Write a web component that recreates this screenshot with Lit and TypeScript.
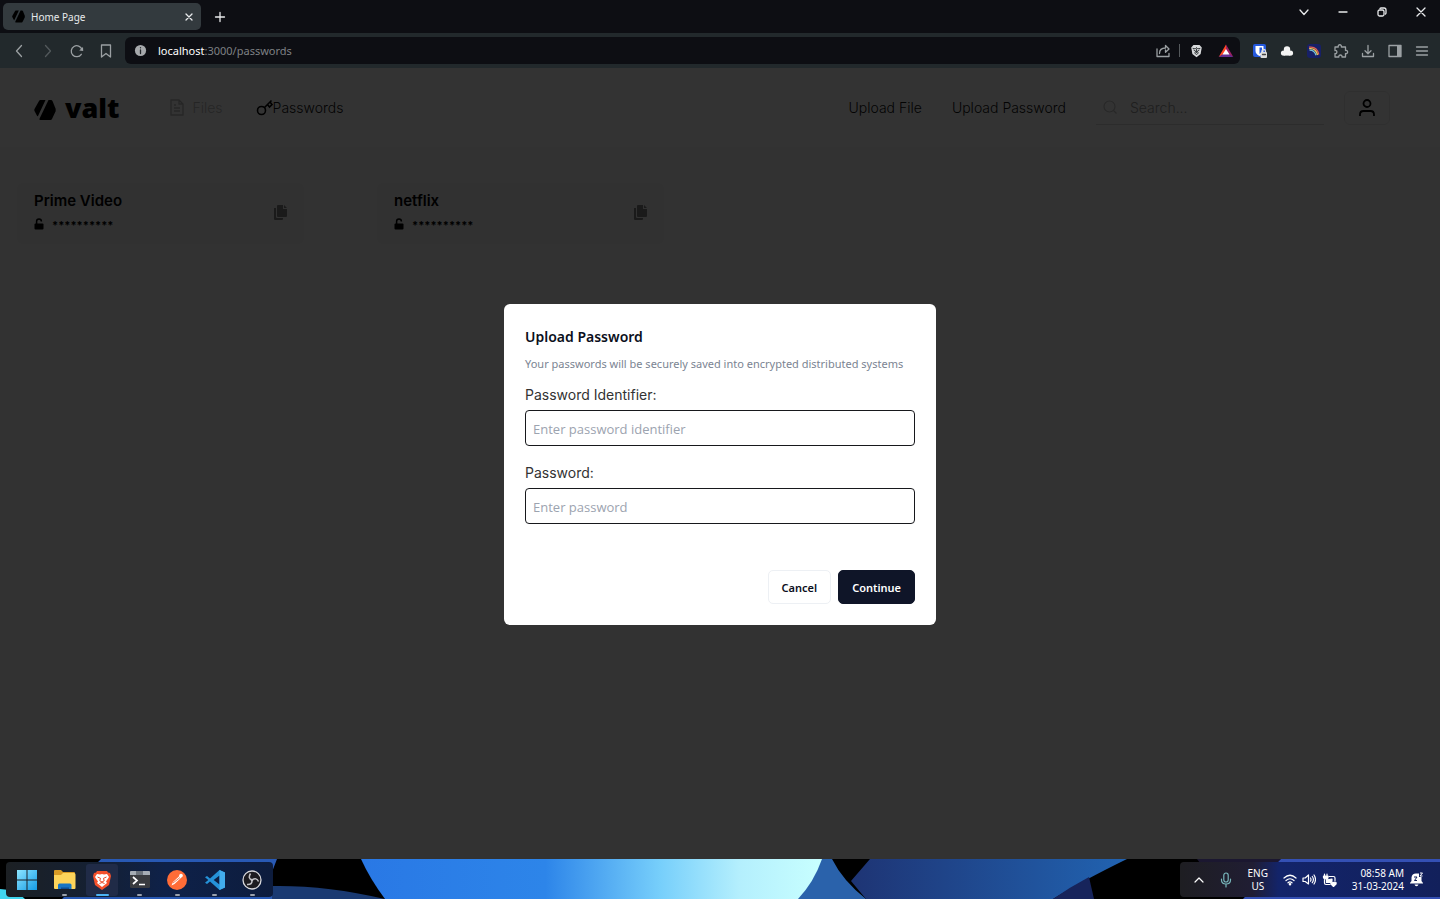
import { LitElement, html, css, svg } from "lit";
import { customElement, property } from "lit/decorators.js";

const logoMark = svg`
  <path d="M6.500 1H11.500L4 17Q3.300 17.500 3 16.700L.5 12Q0 11 .5 10L5 2Q5.500 1 6.500 1Z" />
  <path d="M14.500 1H17Q18 1 18.500 2L21.500 9.500Q22 11 21.500 12.500L18 20Q17.500 21 16.500 21H6.500Q5 21 5.500 19.800Z" />
`;

@customElement("browser-chrome")
export class BrowserChrome extends LitElement {
  static styles = css`
    :host {
      display: block;
      font-family: "Noto Sans", "Open Sans", sans-serif;
      color: #e8eaec;
    }
    button {
      border: 0;
      padding: 0;
      background: none;
      color: inherit;
      display: grid;
      place-items: center;
    }
    svg {
      display: block;
      fill: none;
      stroke: currentColor;
      stroke-width: 1.3;
      stroke-linecap: round;
      stroke-linejoin: round;
    }
    .tabs {
      height: 33px;
      background: #0d0e13;
      display: flex;
      align-items: flex-start;
      padding: 0 0 0 3px;
      box-sizing: border-box;
    }
    .tab {
      margin-top: 3px;
      width: 198px;
      height: 27px;
      box-sizing: border-box;
      border-radius: 5px;
      background: #333a3e;
      display: flex;
      align-items: center;
      gap: 6px;
      padding: 0 6px 0 9px;
      font-size: 10px;
    }
    .tab .name {
      flex: 1;
    }
    .tab .fav {
      fill: #000;
      stroke: none;
    }
    .new {
      width: 38px;
      height: 33px;
    }
    .controls {
      margin-left: auto;
      display: flex;
    }
    .controls button {
      width: 39px;
      height: 24px;
    }
    .bar {
      height: 35px;
      box-sizing: border-box;
      background: #22292c;
      display: flex;
      align-items: center;
      padding: 0 5px;
      color: #9ba0a3;
    }
    .bar button {
      width: 27px;
      height: 27px;
    }
    .nav {
      display: flex;
      gap: 2px;
      width: 120px;
    }
    .nav .off {
      color: #53595c;
    }
    .address {
      flex: 1;
      height: 27px;
      border-radius: 6px;
      background: #0d0e13;
      display: flex;
      align-items: center;
      gap: 2px;
      padding: 0 1px 0 9px;
    }
    .address input {
      position: absolute;
      opacity: 0;
      inset: 0;
    }
    .url {
      flex: 1;
      position: relative;
      margin-left: 9px;
      font-size: 11px;
      color: #7e8184;
    }
    .url b {
      font-weight: 400;
      color: #fff;
    }
    .sep {
      width: 1px;
      height: 13px;
      background: #55595c;
      margin: 0 1px;
    }
    .ext {
      display: flex;
      margin-left: 6px;
    }
    .face {
      stroke: #25292c;
      stroke-width: 1;
    }
  `;

  render() {
    return html`
      <div class="tabs">
        <div class="tab">
          <svg class="fav" width="13" height="13" viewBox="0 0 22 22">${logoMark}</svg>
          <span class="name">Home Page</span>
          <button aria-label="Close tab">
            <svg width="12" height="12" viewBox="0 0 12 12"><path d="M3 3l6 6M9 3l-6 6" /></svg>
          </button>
        </div>
        <button class="new" aria-label="New tab">
          <svg width="14" height="14" viewBox="0 0 14 14"><path d="M7 2.500v9M2.500 7h9" /></svg>
        </button>
        <div class="controls">
          <button aria-label="Search tabs"><svg width="12" height="12" viewBox="0 0 12 12"><path d="M2 4l4 4.500L10 4" /></svg></button>
          <button aria-label="Minimize"><svg width="12" height="12" viewBox="0 0 12 12"><path d="M2 6h8" /></svg></button>
          <button aria-label="Restore"><svg width="12" height="12" viewBox="0 0 12 12"><rect x="2" y="4" width="6" height="6" rx="1.500" /><path d="M4 2.500q.5-.5 1-.5h3q2 0 2 2v3q0 .5-.5 1" /></svg></button>
          <button aria-label="Close"><svg width="12" height="12" viewBox="0 0 12 12"><path d="M2 2l8 8M10 2l-8 8" /></svg></button>
        </div>
      </div>
      <div class="bar">
        <div class="nav">
          <button aria-label="Back"><svg width="16" height="16" viewBox="0 0 16 16"><path d="M10.500 2.500L5.500 8l5 5.500" /></svg></button>
          <button class="off" aria-label="Forward"><svg width="16" height="16" viewBox="0 0 16 16"><path d="M5.500 2.500l5 5.500-5 5.500" /></svg></button>
          <button aria-label="Reload"><svg width="16" height="16" viewBox="0 0 16 16"><path d="M12.300 11.300A5.500 5.500 0 1 1 13 6.500" /><path d="M14 4l.2 4-4-.5z" fill="currentColor" stroke="none" /></svg></button>
          <button aria-label="Bookmark"><svg width="16" height="16" viewBox="0 0 16 16"><path d="M3.500 2h9v12L8 10.500 3.500 14z" /></svg></button>
        </div>
        <div class="address">
          <svg width="13" height="13" viewBox="0 0 13 13"><circle cx="6.500" cy="6.500" r="5.600" fill="#a6a9ac" stroke="none" /><path d="M6.500 6v3.500M6.500 3.600v.2" stroke="#22262a" /></svg>
          <label class="url"><b>localhost</b>:3000/passwords<input aria-label="Address" value="localhost:3000/passwords" /></label>
          <button aria-label="Share"><svg width="16" height="16" viewBox="0 0 16 16"><path d="M2 6v7.500h12V10.500M4.500 10.500c0-3.500 2-5.500 6-5.500V2.500L14 6l-3.500 3.300V7" /></svg></button>
          <span class="sep"></span>
          <button aria-label="Brave Shields">
            <svg width="13" height="14" viewBox="0 0 14 16"><g stroke="none"><path d="M3.500 1h7l2.500 3-1.300 7.500L7 15 2.300 11.500 1 4z" fill="#d9dbdd" /></g><path class="face" d="M3 5l2.500.5L7 4l1.500 1.500L11 5M4 7l2 1-1 2.500 2 1.500 2-1.500L8 8l2-1M7 5.500V10" /></svg>
          </button>
          <button aria-label="Brave Rewards">
            <svg width="16" height="14" viewBox="0 0 16 14"><g stroke="none"><path d="M8 .5L.7 13 8 9z" fill="#ff4724" /><path d="M8 .5L15.300 13 8 9z" fill="#9e1f63" /><path d="M.7 13h14.600L8 8z" fill="#662d91" /><path d="M8 5l-3.500 5.500h7z" fill="#fff" /></g></svg>
          </button>
        </div>
        <div class="ext">
          <button aria-label="Password manager">
            <svg width="16" height="16" viewBox="0 0 16 16"><g stroke="none"><rect x="1" y="1" width="13" height="13" rx="2" fill="#2458dd" /><path d="M3.500 3h8v5q0 3-4 5-4-2-4-5z" fill="#fff" /><path d="M7.500 4.500h2.500V8q0 1.500-2.500 3z" fill="#2458dd" /><rect x="8.500" y="9" width="6.500" height="6" rx="1" fill="#ddd" /></g><path d="M10 9V8q0-1.500 1.700-1.500T13.500 8v1" stroke="#ddd" /><path d="M10.500 11.500h3" stroke="#444" /></svg>
          </button>
          <button aria-label="Cloud extension">
            <svg width="16" height="16" viewBox="0 0 16 16"><g fill="#f4f4f4" stroke="none"><circle cx="8" cy="6.500" r="3.200" /><circle cx="4.500" cy="10" r="2.600" /><circle cx="11.500" cy="10" r="2.600" /><rect x="4.500" y="8" width="7" height="4.600" /></g></svg>
          </button>
          <button aria-label="Rainbow extension">
            <svg width="16" height="16" viewBox="0 0 16 16"><rect x="1" y="1" width="14" height="14" rx="3" fill="#172067" stroke="none" /><g stroke-linecap="butt"><path d="M3 4.200Q11 3 12.800 11.500" stroke="#e56151" /><path d="M3.200 5.700Q10 5 11.500 12" stroke="#f2d15b" /><path d="M3.500 7.200Q8.500 7 10 12.300" stroke="#76c5d8" /></g></svg>
          </button>
          <button aria-label="Extensions"><svg width="16" height="16" viewBox="0 0 16 16"><path d="M2 4h3.300c-1-3 4-3 3 0h4.200v3.500c2.800-1 2.800 3.800 0 3V14H9c.5-2.700-3.700-2.700-3.200 0H2v-3.500c2.500.5 2.500-3.500 0-3z" /></svg></button>
          <button aria-label="Downloads"><svg width="16" height="16" viewBox="0 0 16 16"><path d="M8 2.500v8M5 7.800l3 3 3-3M2.500 10.500v3h11v-3" /></svg></button>
          <button aria-label="Sidebar"><svg width="16" height="16" viewBox="0 0 16 16"><rect x="2" y="2.500" width="12" height="11" /><path d="M10 3h4v10.500h-4z" fill="currentColor" stroke="none" /></svg></button>
          <button aria-label="Menu"><svg width="16" height="16" viewBox="0 0 16 16"><path d="M2.500 4h11M2.500 8h11M2.500 12h11" /></svg></button>
        </div>
      </div>
    `;
  }
}

@customElement("password-card")
export class PasswordCard extends LitElement {
  @property() name = "";

  static styles = css`
    :host {
      display: block;
      padding: 0 17px;
    }
    .card {
      max-width: 287px;
      height: 61px;
      box-sizing: border-box;
      padding: 0 16px 2px 17px;
      background: #f2f2f2;
      border-radius: 6px;
      display: flex;
      align-items: center;
      justify-content: space-between;
      color: #000;
    }
    h3 {
      margin: 0;
      font-size: 15px;
      line-height: 20px;
      font-weight: 600;
    }
    .secret {
      display: flex;
      align-items: center;
      gap: 8px;
      margin-top: 2px;
      height: 22px;
      font-size: 11px;
      font-weight: 700;
    }
    .secret span {
      padding-top: 2px;
    }
    button {
      border: 0;
      background: none;
      padding: 0;
      color: #828282;
    }
    svg {
      display: block;
    }
  `;

  render() {
    return html`
      <article class="card">
        <div>
          <h3>${this.name}</h3>
          <div class="secret">
            <svg width="10" height="12" viewBox="0 0 10 12"><rect x=".5" y="5.500" width="9" height="6" rx="1" fill="currentColor" /><path d="M2.600 6V3.500Q2.600 1 5 1t2.400 2.500" fill="none" stroke="currentColor" stroke-width="1.500" /></svg>
            <span>**********</span>
          </div>
        </div>
        <button aria-label="Copy password">
          <svg width="15" height="16" viewBox="0 0 15 16" fill="currentColor"><path d="M5 0h5v4h4v7q0 1-1 1H5q-1 0-1-1V1q0-1 1-1zM11 0l3 3h-3zM1 3h2v9q0 1 1 1h6v1q0 1-1 1H2q-1 0-1-1z" /></svg>
        </button>
      </article>
    `;
  }
}

@customElement("task-bar")
export class TaskBar extends LitElement {
  static styles = css`
    :host {
      display: flex;
      justify-content: space-between;
      position: relative;
      height: 40px;
      background: #000;
      overflow: hidden;
      color: #fff;
      font-family: "Noto Sans", "Open Sans", sans-serif;
    }
    .wallpaper {
      position: absolute;
      inset: 0;
      width: 100%;
      height: 100%;
    }
    svg {
      display: block;
    }
    button {
      border: 0;
      background: none;
      padding: 0;
      color: inherit;
      font: inherit;
      display: grid;
      place-items: center;
    }
    .apps,
    .tray {
      position: relative;
      margin-top: 3px;
      height: 35px;
      display: flex;
      align-items: center;
    }
    .apps {
      margin-left: 6px;
      width: 267px;
      border-radius: 4px;
      background: linear-gradient(90deg, #1c2024, #142034 35%, #0e2149 60%, #0d1c3d);
      justify-content: space-between;
      padding: 0 5px;
      box-sizing: border-box;
    }
    .apps button {
      position: relative;
      width: 32px;
      height: 32px;
    }
    .apps .open::after,
    .apps .active::after {
      content: "";
      position: absolute;
      bottom: 0;
      width: 5px;
      height: 2px;
      border-radius: 1px;
      background: #9ba2ad;
    }
    .apps .active {
      background: #202b47;
      border-radius: 3px;
    }
    .apps .active::after {
      width: 13px;
      background: #4cb5f5;
    }
    .tray {
      padding: 0 14px 0 9px;
      border-radius: 4px 0 0 4px;
      background: linear-gradient(90deg, #1e1e22, #201d33 28%, #13246a 38%, #12205b);
      font-size: 10px;
      line-height: 13px;
      text-align: center;
    }
    .tray button {
      min-width: 20px;
      height: 32px;
    }
    .tray .mic {
      margin: 0 9px 0 7px;
      color: #78b6bb;
    }
    .tray .lang {
      width: 26px;
    }
    .tray .status {
      display: flex;
      align-items: center;
      width: 55px;
      margin: 0 14px 0 12px;
      justify-content: space-between;
    }
    .tray .clock {
      text-align: right;
      justify-items: end;
      margin-right: 2px;
    }
    .line {
      fill: none;
      stroke: currentColor;
      stroke-width: 1.2;
      stroke-linecap: round;
      stroke-linejoin: round;
    }
  `;

  render() {
    return html`
      <svg class="wallpaper" viewBox="0 0 1440 40" preserveAspectRatio="none" aria-hidden="true">
        <defs>
          <linearGradient id="sky"><stop offset="0" stop-color="#2978e5" /><stop offset=".4" stop-color="#2d85e9" /><stop offset=".65" stop-color="#77cffb" /><stop offset=".82" stop-color="#b4effd" /><stop offset="1" stop-color="#c8ffff" /></linearGradient>
          <linearGradient id="deep"><stop offset="0" stop-color="#1e3474" /><stop offset="1" stop-color="#2163b1" /></linearGradient>
        </defs>
        <path d="M0 30Q15 30 25 40H0Z" fill="#40d5ee" />
        <path d="M101 0H277L272 13V40H62Z" fill="#2859b4" />
        <path d="M272 27Q325 26 385 40H272Z" fill="#1a3a72" />
        <path d="M820 0H832Q843 22 866 40H797Z" fill="#2a62ab" />
        <path d="M361 0H822Q814 23 798 40H385Q370 20 361 0Z" fill="url(#sky)" />
        <path d="M870 0H1127Q1080 23 1053 40H866L851 22Z" fill="url(#deep)" />
        <path d="M1089 18L1094 40H1053Q1070 28 1089 18Z" fill="#17245b" />
        <path d="M1197 0H1281L1278 4H1200Z" fill="#1b1730" />
        <path d="M1281 0H1440V40H1243Z" fill="#3450b4" />
      </svg>
      <nav class="apps" aria-label="Taskbar">
        <button aria-label="Start">
          <svg width="20" height="20" viewBox="0 0 20 20"><defs><linearGradient id="win" x2="1" y2="1"><stop stop-color="#8de5ff" /><stop offset="1" stop-color="#149be5" /></linearGradient></defs><path d="M0 0h9.500v9.500H0zM10.500 0H20v9.500h-9.500zM0 10.500h9.500V20H0zM10.500 10.500H20V20h-9.500z" fill="url(#win)" /></svg>
        </button>
        <button class="open" aria-label="File Explorer">
          <svg width="22" height="20" viewBox="0 0 22 20"><path d="M1 0h6l2 2h11q1 0 1 1v7H0V1q0-1 1-1z" fill="#d99b25" /><path d="M0 5h7l2-2h11q1.500 0 1.500 1.500V18q0 1-1 1H1q-1 0-1-1z" fill="#fdd45a" /><path d="M4 19v-4q0-1.500 1.500-1.500h10.500q1.500 0 1.500 1.500v4z" fill="#1775c4" /><path d="M7 19v-1.500h8V19z" fill="#0d4d92" /></svg>
        </button>
        <button class="active" aria-label="Brave">
          <svg width="18" height="20" viewBox="0 0 18 20"><path d="M4 1h10l1 1.500 2 .5 1 3-2 9-7 5-7-5L0 6l1-3 2-.5z" fill="#f4512c" /><path d="M4 4l3 .5L9 4l2 .5 3-.5 2 3-3 4.500 1 1.500-5 4-5-4 1-1.500L2 7z" fill="#fff" /><path d="M4.500 7l3 1.300-.7 2.500L9 12l2.200-1.200-.7-2.500 3-1.300M6.500 13.500L9 12.500l2.500 1" fill="none" stroke="#e84b28" stroke-width="1" /></svg>
        </button>
        <button class="open" aria-label="Terminal">
          <svg width="20" height="18" viewBox="0 0 20 18"><rect width="20" height="17" rx="1.500" fill="#393b3f" /><path d="M1 0h18q1 0 1 1v3H0V1q0-1 1-1z" fill="#a6adb4" /><path d="M6 0h7v4H6z" fill="#6d747c" /><path d="M3 6l4 3.500L3 13M9 13.500h6" fill="none" stroke="#fff" stroke-width="1.700" /></svg>
        </button>
        <button class="open" aria-label="Postman">
          <svg width="20" height="20" viewBox="0 0 20 20"><circle cx="10" cy="10" r="10" fill="#ff6c37" /><path d="M4.500 15.500L6 12l7.500-7 2 1.500-8 7.500z" fill="#fff" /><path d="M6 13l7-5.500" stroke="#e86135" stroke-width=".8" /><circle cx="14" cy="5.500" r="1.800" fill="#fff" /></svg>
        </button>
        <button class="open" aria-label="Visual Studio Code">
          <svg width="20" height="20" viewBox="0 0 20 20"><path d="M14.500 0L20 2.500v15L14.500 20 5 11.500 2 14l-2-1.200L3.300 10 0 7.200 2 6l3 2.500zM14.500 5.500L8.700 10l5.800 4.500z" fill="#2592d8" fill-rule="evenodd" /><path d="M14.500 0L20 2.500v15L14.500 20z" fill="#42acec" /></svg>
        </button>
        <button class="open" aria-label="OBS Studio">
          <svg width="20" height="20" viewBox="0 0 20 20"><circle cx="10" cy="10" r="9" fill="#1c1b20" stroke="#d8d8dc" stroke-width="1.300" /><path d="M10 10Q5.500 8.500 8.500 3.500M10 10q4.500-3 6.500 1.500M10 10q.5 5-5 4.500" fill="none" stroke="#c2c2c7" stroke-width="1.500" /><circle cx="10" cy="10" r="1.300" fill="#c2c2c7" /></svg>
        </button>
      </nav>
      <div class="tray">
        <button aria-label="Show hidden icons"><svg class="line" width="12" height="12" viewBox="0 0 12 12"><path d="M2 8l4-4 4 4" /></svg></button>
        <button class="mic" aria-label="Microphone"><svg class="line" width="12" height="16" viewBox="0 0 12 16"><rect x="3.800" y="1" width="4.400" height="9" rx="2.200" /><path d="M1.500 7v1q0 4 4.500 4t4.500-4V7M6 12v3" /></svg></button>
        <button class="lang">ENG<br />US</button>
        <button class="status" aria-label="Network, volume, battery">
          <svg class="line" width="14" height="13" viewBox="0 0 14 13"><path d="M1 5q6-5.500 12 0M3 7.500q4-3.500 8 0M5 9.800q2-1.800 4 0" /><circle cx="7" cy="11.200" r=".7" fill="currentColor" /></svg>
          <svg class="line" width="14" height="13" viewBox="0 0 14 13"><path d="M1 5h2.200L6.500 2v9L3.200 8.500H1zM8.500 5q1 1.500 0 3.200M10.300 3.500q2.200 3 0 6.200M12 2q3 4.500 0 9" /></svg>
          <svg class="line" width="16" height="14" viewBox="0 0 16 14"><path d="M7 3.500h4.500Q13 3.500 13 5v2.500M8 11.500H4q-1.500 0-1.500-1.500V6.500M2.500 1v1.500M5 1v1.500" /><path d="M1.500 3h4.500v1.500Q6 6 3.800 6T1.500 4.500zM4.500 9.500V7L10 6v1.500L8.500 9.500zM11.500 13.500L9 11q-.5-2 1-2 1 0 1.500 1 .5-1 1.500-1 1.500 0 1 2z" fill="currentColor" /></svg>
        </button>
        <button class="clock"><span>08:58 AM<br />31-03-2024</span></button>
        <button aria-label="Notifications"><svg width="15" height="15" viewBox="0 0 15 15"><path d="M1 11l1.500-2V5.500Q3 1.500 7 1.500h3V5h2.500v4l1.500 2v.5H1zM5.500 12.500h4q-.5 1.800-2 1.800t-2-1.800z" fill="#fff" /><path d="M5 5h3L5.500 8.500H8" fill="none" stroke="#12205b" /><path d="M11 1h2.500L11 4h2.500" fill="none" stroke="#fff" /></svg></button>
      </div>
    `;
  }
}

@customElement("app-root")
export class AppRoot extends LitElement {
  static styles = css`
    :host {
      display: flex;
      flex-direction: column;
      height: 100vh;
      overflow: hidden;
    }
    .page {
      flex: 1;
      min-height: 0;
      position: relative;
      background: #fbfbfb;
      font-family: Inter, "Open Sans", sans-serif;
      font-size: 14px;
      color: #111;
    }
    svg {
      display: block;
    }
    a {
      color: inherit;
      text-decoration: none;
    }
    .header {
      height: 79px;
      box-sizing: border-box;
      background: #fff;
      display: flex;
      align-items: center;
      padding: 0 50px 0 34px;
      font-weight: 300;
    }
    .logo {
      display: flex;
      align-items: center;
      gap: 9px;
      color: #000;
      font-family: "Open Sans", sans-serif;
      font-size: 27px;
      line-height: 36px;
      font-weight: 800;
      margin-right: 50px;
    }
    .logo svg {
      margin-top: 5px;
    }
    .link {
      display: flex;
      align-items: center;
    }
    .files {
      color: #bbb;
      gap: 6px;
      margin-right: 33px;
    }
    .actions {
      margin-left: auto;
      display: flex;
      align-items: center;
      gap: 30px;
    }
    .search {
      display: flex;
      align-items: center;
      gap: 12px;
      height: 34px;
      width: 228px;
      box-sizing: border-box;
      border-bottom: 1px solid #ddd;
      padding-left: 6px;
      color: #c4c4c4;
    }
    .search input {
      border: 0;
      outline: 0;
      background: none;
      padding: 0;
      min-width: 0;
      flex: 1;
      font: inherit;
    }
    .search input::placeholder {
      color: #999;
    }
    .user {
      width: 46px;
      height: 34px;
      padding: 0;
      margin-left: -10px;
      border: 1px solid #ebebeb;
      border-radius: 6px;
      background: none;
      color: #000;
      display: grid;
      place-items: center;
    }
    .cards {
      display: grid;
      grid-template-columns: repeat(4, 1fr);
      padding-top: 36px;
    }
    .overlay {
      position: absolute;
      inset: 0;
      background: rgba(0, 0, 0, 0.8);
      display: grid;
      place-items: center;
      padding-top: 2px;
    }
    .dialog {
      width: 432px;
      box-sizing: border-box;
      padding: 21px;
      border-radius: 6px;
      background: #fff;
      font-family: "Noto Sans", "Open Sans", sans-serif;
      color: #0b0f1c;
    }
    .dialog h2 {
      margin: 0;
      font-size: 14px;
      line-height: 24px;
      font-weight: 600;
    }
    .dialog p {
      margin: 6px 0 11px;
      font-size: 11px;
      line-height: 18px;
      color: #7b8492;
    }
    .field {
      display: block;
      margin-bottom: 16px;
    }
    .field label {
      display: block;
      margin-bottom: 4px;
      font-family: Inter, sans-serif;
      font-size: 14px;
      line-height: 22px;
      color: #333;
    }
    .field input {
      display: block;
      width: 100%;
      height: 36px;
      box-sizing: border-box;
      padding: 1px 7px 0;
      border: 1px solid #17181c;
      border-radius: 4px;
      outline: 0;
      font-family: "Open Sans", sans-serif;
      font-size: 13px;
    }
    .field input::placeholder {
      color: #9ca3af;
    }
    .buttons {
      display: flex;
      justify-content: flex-end;
      gap: 7px;
      margin-top: 46px;
    }
    .buttons button {
      height: 34px;
      padding: 0 13px;
      border: 1px solid #edf0f4;
      border-radius: 5px;
      background: #fff;
      color: #0b0f1c;
      font-family: inherit;
      font-size: 11px;
      font-weight: 600;
    }
    .buttons .primary {
      background: #0f1528;
      border-color: #0f1528;
      color: #fff;
    }
  `;

  render() {
    return html`
      <browser-chrome></browser-chrome>
      <main class="page">
        <header class="header">
          <a class="logo" href="#">
            <svg width="22" height="22" viewBox="0 0 22 22" fill="currentColor">${logoMark}</svg>
            valt
          </a>
          <a class="link files" href="#">
            <svg width="17" height="17" viewBox="0 0 17 17" fill="none" stroke="currentColor" stroke-width="1.300"><path d="M2 1h8l4 4v11H2zM10 1v4h4M5 6h2M5 9h6M5 12h6" /></svg>
            Files
          </a>
          <a class="link" href="#">
            <svg width="17" height="17" viewBox="0 0 17 17" fill="none" stroke="#000" stroke-width="1.600"><circle cx="5.500" cy="11.500" r="4" /><path d="M8.500 8.500l7-7M11.500 5.500l2 2.500L16 5.500l-2-2.500" /></svg>
            Passwords
          </a>
          <div class="actions">
            <a href="#">Upload File</a>
            <a href="#">Upload Password</a>
            <label class="search">
              <svg width="16" height="16" viewBox="0 0 16 16" fill="none" stroke="currentColor" stroke-width="1.200"><circle cx="7.500" cy="7.500" r="5.500" /><path d="M11.500 11.500l3 3" /></svg>
              <input type="search" placeholder="Search..." aria-label="Search" />
            </label>
            <button class="user" aria-label="Account">
              <svg width="20" height="20" viewBox="0 0 20 20" fill="none" stroke="currentColor" stroke-width="1.800"><circle cx="10" cy="5.500" r="3.500" /><path d="M3 18v-1.500q0-3.500 3.500-3.500h7q3.500 0 3.500 3.500V18" /></svg>
            </button>
          </div>
        </header>
        <section class="cards">
          <password-card name="Prime Video"></password-card>
          <password-card name="netflix"></password-card>
        </section>
        <div class="overlay">
          <form class="dialog" role="dialog" aria-labelledby="title" @submit=${(e: Event) => e.preventDefault()}>
            <h2 id="title">Upload Password</h2>
            <p>Your passwords will be securely saved into encrypted distributed systems</p>
            <div class="field">
              <label for="identifier">Password Identifier:</label>
              <input id="identifier" placeholder="Enter password identifier" />
            </div>
            <div class="field">
              <label for="password">Password:</label>
              <input id="password" type="password" placeholder="Enter password" />
            </div>
            <div class="buttons">
              <button type="button">Cancel</button>
              <button class="primary" type="submit">Continue</button>
            </div>
          </form>
        </div>
      </main>
      <task-bar></task-bar>
    `;
  }
}
